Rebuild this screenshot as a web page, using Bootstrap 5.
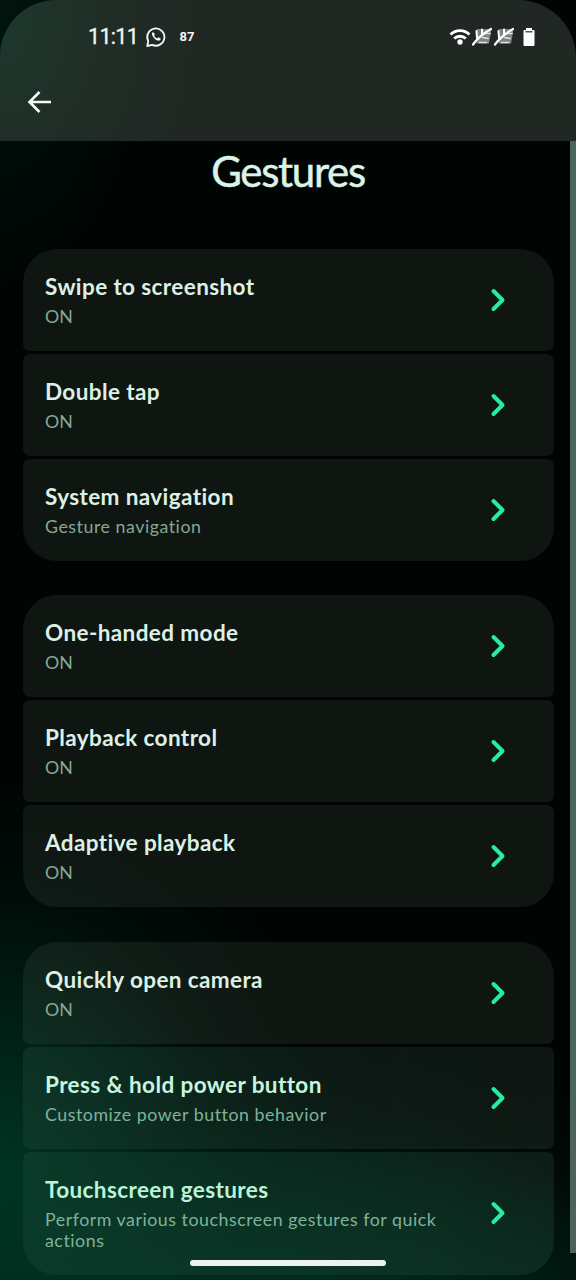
<!DOCTYPE html>
<html lang="en" data-bs-theme="dark">
<head>
<meta charset="utf-8">
<meta name="viewport" content="width=device-width, initial-scale=1">
<title>Gestures</title>
<link href="https://cdn.jsdelivr.net/npm/bootstrap@5.3.0/dist/css/bootstrap.min.css" rel="stylesheet">
<style>
html { background: #000503; overflow: hidden; }
body {
  font-family: Lato, "Open Sans", sans-serif; font-variant-ligatures: none;
  height: 1280px; overflow: hidden; color: #dcf0e5;
  background:
    radial-gradient(ellipse 340px 400px at 0 1175px, rgba(0,56,38,.9) 0, rgba(0,50,34,.62) 35%, rgba(0,34,23,.24) 70%, transparent),
    radial-gradient(ellipse 640px 270px at 220px 1320px, rgba(0,62,42,.85) 0, rgba(0,54,37,.6) 40%, rgba(0,34,23,.2) 76%, transparent),
    radial-gradient(ellipse 150px 290px at 0 0, rgba(0,24,15,.8), transparent),
    #000503;
}
.top-panel {
  height: 141px; border-radius: 56px 58px 0 0;
  background: radial-gradient(ellipse 190px 260px at 0 20px, #1d382d, rgba(31,50,41,.5) 55%, transparent) #212824;
}
.status-row { height: 74px; padding: 0 41px 0 88px; color: #f2f7f4; }
.clock { font: 400 21.5px/24px Roboto, sans-serif; letter-spacing: -.7px; width: 57px; -webkit-text-stroke: .3px; }
.count { font: 700 13px/16px Roboto, sans-serif; margin-left: 12.5px; }
.back-row { height: 57px; padding-left: 26px; }
.back-row svg { margin-top: -1px; }
.page-title { font-size: 42px; line-height: 50px; font-weight: 400; color: #dcf3e7; letter-spacing: -1.3px; -webkit-text-stroke: .5px; }
.title-area { height: 107.8px; padding-top: 5px; }
.groups { width: 531px; margin-left: 22.5px; gap: 34.1px; }
.group-list { gap: 3px; }
.option { height: 102.1px; padding: 0 47px 0 22.5px; border-radius: 7px; background: rgba(112,130,115,.135); }
.option:first-child { border-radius: 34px 34px 7px 7px; }
.option:last-child { border-radius: 7px 7px 34px 34px; }
.option.glow { background: linear-gradient(95deg, rgba(14,60,44,.3), rgba(14,50,37,.25) 50%, rgba(40,70,56,.1)), rgba(112,130,115,.1); }
.option.tall { height: 123.5px; background: linear-gradient(180deg, transparent, rgba(8,60,42,.2)), linear-gradient(95deg, rgba(12,62,45,.5), rgba(12,52,38,.5) 55%, rgba(30,62,48,.2)), rgba(112,130,115,.08); }
.option-text { margin-top: -1px; }
.tall .option-text { margin-top: 0; }
.option-name { font-size: 22.5px; line-height: 30px; font-weight: 700; white-space: nowrap; letter-spacing: .4px; }
.option-note { font-size: 17.8px; line-height: 21px; margin-top: 4px; color: #86a796; width: 410px; letter-spacing: .53px; }
.option-note.short-note { letter-spacing: 0; }
.glow .option-name { color: #c8f5df; }
.tall .option-name { color: #b9f4d8; }
.glow .option-note { color: #7fb39b; }
.scroll-thumb { right: 0; top: 141px; width: 6px; height: 1112px; background: #4b6457; }
.home-bar { left: 190px; top: 1260px; width: 196px; height: 6px; border-radius: 3px; background: #edf2ef; }
</style>
</head>
<body>
<svg class="d-none">
  <symbol id="chev" viewBox="0 0 18 26"><path d="M4.500 4 13.500 13 4.500 22" fill="none" stroke="#25eda3" stroke-width="4" stroke-linecap="round" stroke-linejoin="round"/></symbol>
  <symbol id="nosim" viewBox="0 0 22 20">
    <path d="M6 2H20.500L18 16.500H5.500z" fill="#7d8481"/>
    <path d="M8.500 15.500H15.500M11.500 10.500 17 11.500M14 6.500H19" fill="none" stroke="#dfe4e1" stroke-width="1.700" stroke-linecap="round"/>
    <path d="M5.500 4 6 11M11 2.500V7" fill="none" stroke="#fff" stroke-width="2" stroke-linecap="round"/>
    <path d="M2 17.500Q8 9 20 2" fill="none" stroke="#fff" stroke-width="2.200" stroke-linecap="round"/>
  </symbol>
</svg>
<header class="top-panel">
  <div class="status-row d-flex align-items-center">
    <span class="clock">11:11</span>
    <svg width="22" height="22" viewBox="0 0 24 24"><path d="M2.500 21.800 3.500 16.500A9.400 9.400 0 1 1 7.800 20.600z" fill="none" stroke="#f2f7f4" stroke-width="2" stroke-linejoin="round"/><path d="M8.700 6.600c-1.300.8-1.500 2.300-.4 4.300 1.300 2.400 3.400 4.300 5.600 5 1.900.5 3.200-.5 3.200-2.200l-2.500-1.400-1.300 1.300c-1.500-.7-2.700-1.800-3.400-3.300l1-1.200z" fill="#f2f7f4"/></svg>
    <span class="count">87</span>
    <div class="ms-auto d-flex align-items-center">
      <svg width="22" height="18" viewBox="0 0 22 18"><g fill="none" stroke="#fff" stroke-width="2.800"><path d="M1.500 6.600a13.500 13.500 0 0 1 19 0"/><path d="M5.200 10.600a8.300 8.300 0 0 1 11.600 0"/></g><circle cx="11" cy="14" r="2.700" fill="#fff"/></svg>
      <svg width="22" height="20"><use href="#nosim"/></svg>
      <svg width="22" height="20"><use href="#nosim"/></svg>
      <svg class="ms-2" width="12" height="20" viewBox="0 0 12 20"><path d="M3 1h6v2h1.500q1 0 1 1v14q0 1-1 1h-9q-1 0-1-1V4q0-1 1-1H3z" fill="#fff"/><path d="M2.500 4.800h7" stroke="#27302b" stroke-width="1.200"/></svg>
    </div>
  </div>
  <div class="back-row d-flex align-items-center">
    <svg width="26" height="26" viewBox="0 0 26 26"><path d="M25 13H4M13.500 3 3.500 13l10 10" fill="none" stroke="#f4faf6" stroke-width="2.600" /></svg>
  </div>
</header>
<div class="title-area text-center"><h1 class="page-title m-0">Gestures</h1></div>
<main class="groups d-flex flex-column" id="groups"></main>
<div class="scroll-thumb position-absolute"></div>
<div class="home-bar position-absolute"></div>
<script>
const groups = [
  [["Swipe to screenshot", "ON"], ["Double tap", "ON"], ["System navigation", "Gesture navigation"]],
  [["One-handed mode", "ON"], ["Playback control", "ON"], ["Adaptive playback", "ON"]],
  [["Quickly open camera", "ON"], ["Press & hold power button", "Customize power button behavior"],
   ["Touchscreen gestures", "Perform various touchscreen gestures for quick actions"]]
];
document.getElementById("groups").innerHTML = groups.map((g, gi) =>
  `<section class="group-list d-flex flex-column">${g.map(([name, note], i) =>
    `<div class="option d-flex align-items-center justify-content-between ${gi === 2 && i === 2 ? "tall" : ""} ${gi === 2 && i ? "glow" : ""}">
      <div class="option-text"><div class="option-name">${name.replace("&", "&amp;")}</div><div class="option-note ${note === "ON" ? "short-note" : ""}">${note}</div></div>
      <svg width="18" height="26" class="flex-shrink-0"><use href="#chev"/></svg></div>`).join("")}</section>`).join("");
</script>
<script src="https://cdn.jsdelivr.net/npm/bootstrap@5.3.0/dist/js/bootstrap.bundle.min.js"></script>
</body>
</html>
